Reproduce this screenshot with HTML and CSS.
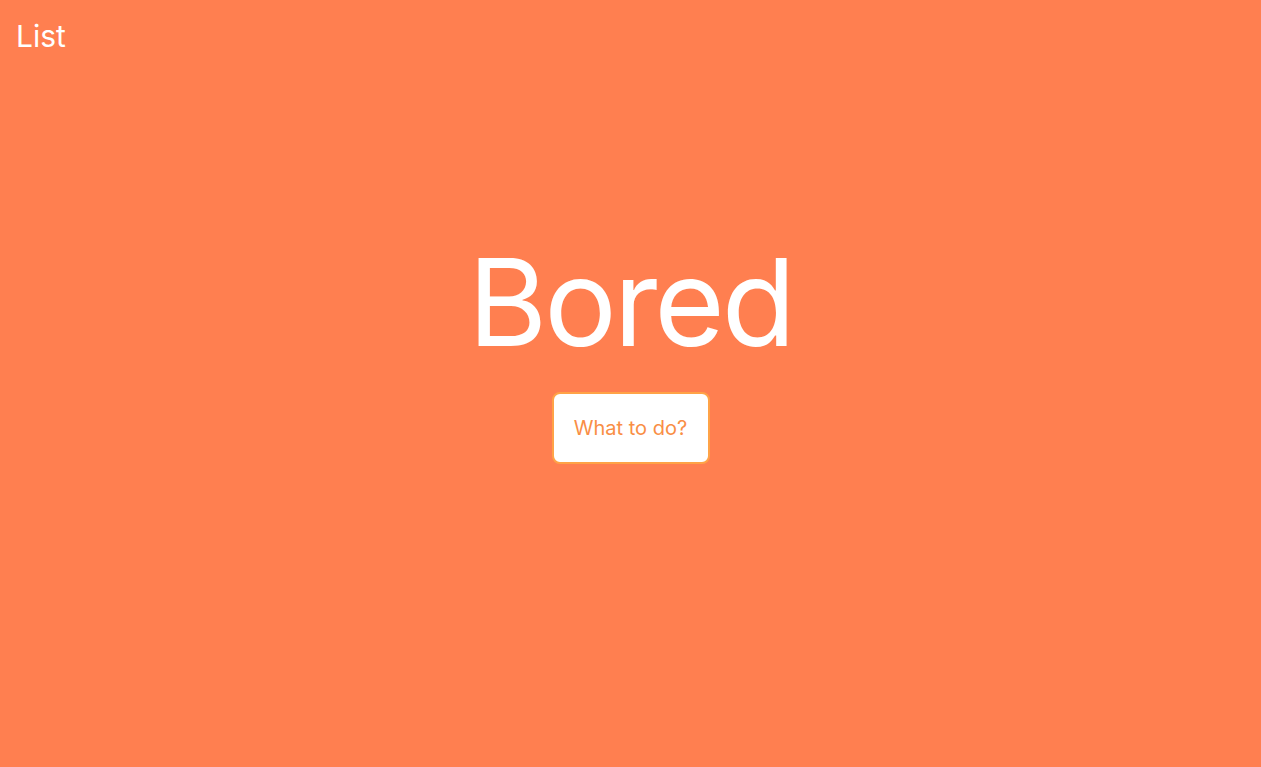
FILE: index.html
```html
<!DOCTYPE html>
<html lang="en">
<head>
<meta charset="utf-8">
<title>Bored</title>
<link rel="stylesheet" href="styles.css">
</head>
<body>
<header class="topbar">
  <a class="nav-link" href="#">List</a>
</header>
<main class="hero">
  <h1 class="hero-title">Bored</h1>
  <button class="hero-button" type="button">What to do?</button>
</main>
</body>
</html>
```
FILE: styles.css
```css
html, body {
  margin: 0;
  padding: 0;
}
body {
  min-height: 100vh;
  background: #ff7f50;
  font-family: Inter, "Noto Sans", sans-serif;
  color: #fff;
}
.topbar {
  padding: 18px 16px 0;
}
.nav-link {
  font-size: 30px;
  line-height: 36px;
  color: #fff;
  text-decoration: none;
  display: inline-block;
}
.hero {
  display: flex;
  flex-direction: column;
  align-items: center;
  margin-top: 175px;
  gap: 17px;
}
.hero-title {
  margin: 0;
  font-size: 121px;
  font-weight: 400;
  letter-spacing: -0.025em;
  line-height: 146px;
  color: #fff;
}
.hero-button {
  width: 158px;
  height: 72px;
  background: #fff;
  border: 2px solid #ffa347;
  border-radius: 8px;
  font-family: Inter, "Noto Sans", sans-serif;
  font-size: 20px;
  color: #f98e45;
  cursor: pointer;
}
```
